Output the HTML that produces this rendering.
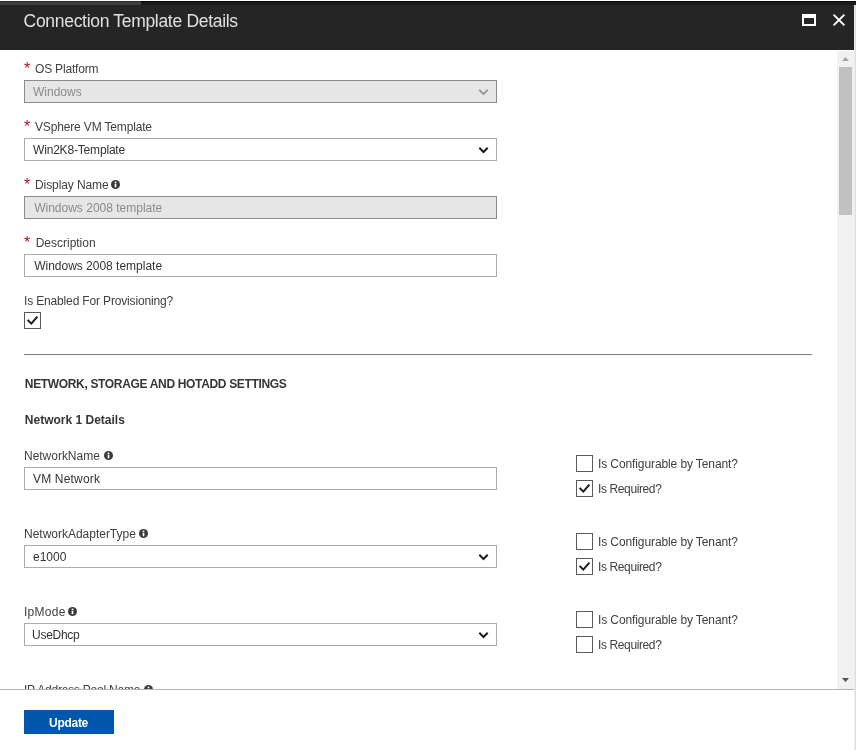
<!DOCTYPE html>
<html lang="en">
<head>
<meta charset="utf-8">
<title>Connection Template Details</title>
<style>
html,body{margin:0;padding:0;}
body{width:856px;height:750px;overflow:hidden;background:#fff;position:relative;
  font-family:"Liberation Sans",sans-serif;font-size:12px;color:#3c3c3c;}
*{box-sizing:border-box;}
#wrap{position:absolute;left:0;top:0;width:856px;height:750px;will-change:transform;}
.abs{position:absolute;}
#hdr{left:0;top:0;width:854px;height:50px;background:#252525;}
#topline{left:0;top:0;width:856px;height:1px;background:#fdfdfd;}
#topdark{left:0;top:1px;width:856px;height:4px;background:#1b1b1b;border-top:1px solid #080808;}
#tab{left:0;top:1px;width:141px;height:4px;background:#3e3e3e;border-top:1px solid #2c2c2c;}
#redge{left:854px;top:5px;width:2px;height:745px;background:#dddde3;border-left:1px solid #ededf1;}
#ttl{left:24px;top:10px;font-size:17.5px;color:#e0e0e0;white-space:nowrap;line-height:22px;}
.lbl{left:24px;white-space:nowrap;line-height:16px;font-size:12px;color:#404040;}
.req{color:#b80d25;font-size:16px;line-height:0;position:relative;top:1px;margin-right:5px;display:inline-block;width:6px;}
.box{left:24px;width:473px;height:23px;border:1px solid #ababab;background:#fff;
  padding-left:8px;padding-top:1px;line-height:21px;font-size:12px;color:#333;white-space:nowrap;}
.box.dis{background:#e6e6e6;border-color:#8c8c8c;color:#8a8a8a;}
.chev{position:absolute;right:7px;top:7px;width:11px;height:8px;}
.cb{width:17px;height:17px;border:1px solid #5a5a5a;background:#fff;}
.cb svg{position:absolute;left:0;top:0;}
.cbl{left:599px;white-space:nowrap;line-height:16px;font-size:12px;color:#404040;}
.info{position:absolute;top:3px;width:9px;height:9px;}
#hr{left:24px;top:354px;width:788px;height:1px;background:#7d7d7d;}
.h1{left:24px;font-weight:bold;font-size:12px;color:#363636;white-space:nowrap;line-height:16px;}
#sbar{left:837px;top:51px;width:17px;height:638px;background:#f1f1f1;}
#thumb{left:839px;top:67px;width:13px;height:148px;background:#c1c1c1;}
#footline{left:0;top:689px;width:854px;height:1px;background:#b5b5b5;}
#foot{left:0;top:690px;width:854px;height:60px;background:#fff;}
#btn{left:24px;top:710px;width:90px;height:24px;background:#0058ad;color:#fff;font-weight:bold;
  font-size:12px;text-align:center;line-height:24px;padding-top:1px;}
</style>
</head>
<body>
<div id="wrap">
<div id="hdr" class="abs"></div>
<div id="topdark" class="abs"></div>
<div id="tab" class="abs"></div>
<div id="topline" class="abs"></div>
<div id="redge" class="abs"></div>
<div id="ttl" class="abs"><span id="title" style="letter-spacing:-0.308px;margin-left:-0.40px;">Connection Template Details</span></div>
<svg class="abs" style="left:802px;top:14px" width="14" height="12" viewBox="0 0 14 12"><path d="M0 0H14V12H0Z M2 4V10H12V4Z" fill="#fff" fill-rule="evenodd"/></svg>
<svg class="abs" style="left:832px;top:13px" width="14" height="14" viewBox="0 0 14 14"><path d="M1.6 1.6L12.4 12.4M12.4 1.6L1.6 12.4" stroke="#fff" stroke-width="1.9" fill="none"/></svg>
<div class="abs lbl" style="top:61px"><span class="req">*</span><span id="osp" style="letter-spacing:-0.190px;">OS Platform</span></div>
<div class="abs box dis" style="top:80px"><span id="win" style="letter-spacing:0.000px;">Windows</span><svg class="chev" viewBox="0 0 11 8"><path d="M1.3 1.8L5.5 6L9.7 1.8" stroke="#8e8e8e" stroke-width="1.7" fill="none"/></svg></div>
<div class="abs lbl" style="top:119px"><span class="req">*</span><span id="vsp" style="letter-spacing:-0.156px;">VSphere VM Template</span></div>
<div class="abs box" style="top:138px"><span id="w2k" style="letter-spacing:-0.179px;">Win2K8-Template</span><svg class="chev" viewBox="0 0 11 8"><path d="M1.3 1.8L5.5 6L9.7 1.8" stroke="#1a1a1a" stroke-width="2" fill="none"/></svg></div>
<div class="abs lbl" style="top:177px"><span class="req">*</span><span id="dn" style="letter-spacing:-0.091px;">Display Name</span><svg class="info" style="left:87px" viewBox="0 0 9 9"><circle cx="4.5" cy="4.5" r="4.5" fill="#3a3a3a"/><rect x="3.65" y="3.7" width="1.7" height="3.6" fill="#fff"/><rect x="3.65" y="1.6" width="1.7" height="1.5" fill="#fff"/></svg></div>
<div class="abs box dis" style="top:196px"><span id="wd1" style="letter-spacing:0.000px;margin-left:1.20px;">Windows 2008 template</span></div>
<div class="abs lbl" style="top:235px"><span class="req">*</span><span id="desc" style="letter-spacing:-0.010px;margin-left:0.70px;">Description</span></div>
<div class="abs box" style="top:254px"><span id="wd2" style="letter-spacing:-0.010px;margin-left:1.20px;">Windows 2008 template</span></div>
<div class="abs lbl" style="top:293px"><span id="ien" style="letter-spacing:-0.156px;">Is Enabled For Provisioning?</span></div>
<div class="abs cb" style="left:24px;top:312px"><svg width="15" height="15" viewBox="0 0 15 15"><path d="M2.6 6.9L6.3 10.6L12.4 3.6" stroke="#1a1a1a" stroke-width="2" fill="none"/></svg></div>
<div id="hr" class="abs"></div>
<div class="abs h1" style="top:376px"><span id="net" style="letter-spacing:-0.337px;margin-left:0.80px;">NETWORK, STORAGE AND HOTADD SETTINGS</span></div>
<div class="abs h1" style="top:412px"><span id="n1d" style="letter-spacing:0.000px;margin-left:0.80px;">Network 1 Details</span></div>
<div class="abs lbl" style="top:448px"><span id="nn" style="letter-spacing:-0.020px;">NetworkName</span><svg class="info" style="left:80px" viewBox="0 0 9 9"><circle cx="4.5" cy="4.5" r="4.5" fill="#3a3a3a"/><rect x="3.65" y="3.7" width="1.7" height="3.6" fill="#fff"/><rect x="3.65" y="1.6" width="1.7" height="1.5" fill="#fff"/></svg></div>
<div class="abs box" style="top:467px"><span id="vmn" style="letter-spacing:0.178px;">VM Network</span></div>
<div class="abs cb" style="left:576px;top:455px"></div>
<div class="abs cbl" style="top:456px"><span id="c1" style="letter-spacing:-0.104px;margin-left:-1.00px;">Is Configurable by Tenant?</span></div>
<div class="abs cb" style="left:576px;top:480px"><svg width="15" height="15" viewBox="0 0 15 15"><path d="M2.6 6.9L6.3 10.6L12.4 3.6" stroke="#1a1a1a" stroke-width="2" fill="none"/></svg></div>
<div class="abs cbl" style="top:481px"><span id="r1" style="letter-spacing:-0.382px;margin-left:-1.00px;">Is Required?</span></div>
<div class="abs lbl" style="top:526px"><span id="nat" style="letter-spacing:-0.012px;">NetworkAdapterType</span><svg class="info" style="left:115px" viewBox="0 0 9 9"><circle cx="4.5" cy="4.5" r="4.5" fill="#3a3a3a"/><rect x="3.65" y="3.7" width="1.7" height="3.6" fill="#fff"/><rect x="3.65" y="1.6" width="1.7" height="1.5" fill="#fff"/></svg></div>
<div class="abs box" style="top:545px"><span id="e1k" style="letter-spacing:0.000px;">e1000</span><svg class="chev" viewBox="0 0 11 8"><path d="M1.3 1.8L5.5 6L9.7 1.8" stroke="#1a1a1a" stroke-width="2" fill="none"/></svg></div>
<div class="abs cb" style="left:576px;top:533px"></div>
<div class="abs cbl" style="top:534px"><span id="c2" style="letter-spacing:-0.104px;margin-left:-1.00px;">Is Configurable by Tenant?</span></div>
<div class="abs cb" style="left:576px;top:558px"><svg width="15" height="15" viewBox="0 0 15 15"><path d="M2.6 6.9L6.3 10.6L12.4 3.6" stroke="#1a1a1a" stroke-width="2" fill="none"/></svg></div>
<div class="abs cbl" style="top:559px"><span id="r2" style="letter-spacing:-0.382px;margin-left:-1.00px;">Is Required?</span></div>
<div class="abs lbl" style="top:604px"><span id="ipm" style="letter-spacing:0.280px;">IpMode</span><svg class="info" style="left:44px" viewBox="0 0 9 9"><circle cx="4.5" cy="4.5" r="4.5" fill="#3a3a3a"/><rect x="3.65" y="3.7" width="1.7" height="3.6" fill="#fff"/><rect x="3.65" y="1.6" width="1.7" height="1.5" fill="#fff"/></svg></div>
<div class="abs box" style="top:623px"><span id="dhcp" style="letter-spacing:-0.283px;margin-left:-0.90px;">UseDhcp</span><svg class="chev" viewBox="0 0 11 8"><path d="M1.3 1.8L5.5 6L9.7 1.8" stroke="#1a1a1a" stroke-width="2" fill="none"/></svg></div>
<div class="abs cb" style="left:576px;top:611px"></div>
<div class="abs cbl" style="top:612px"><span id="c3" style="letter-spacing:-0.104px;margin-left:-1.00px;">Is Configurable by Tenant?</span></div>
<div class="abs cb" style="left:576px;top:636px"></div>
<div class="abs cbl" style="top:637px"><span id="r3" style="letter-spacing:-0.382px;margin-left:-1.00px;">Is Required?</span></div>
<div class="abs lbl" style="top:682px"><span id="ipn" style="letter-spacing:-0.211px;">IP Address Pool Name</span><svg class="info" style="left:120px" viewBox="0 0 9 9"><circle cx="4.5" cy="4.5" r="4.5" fill="#3a3a3a"/><rect x="3.65" y="3.7" width="1.7" height="3.6" fill="#fff"/><rect x="3.65" y="1.6" width="1.7" height="1.5" fill="#fff"/></svg></div>
<div id="sbar" class="abs"></div>
<div id="thumb" class="abs"></div>
<svg class="abs" style="left:842px;top:57px" width="7" height="4" viewBox="0 0 7 4"><path d="M0 4L3.5 0L7 4Z" fill="#a3a3a3"/></svg>
<svg class="abs" style="left:842px;top:678px" width="7" height="4" viewBox="0 0 7 4"><path d="M0 0L3.5 4L7 0Z" fill="#505050"/></svg>
<div id="foot" class="abs"></div>
<div id="footline" class="abs"></div>
<div id="btn" class="abs"><span id="upd" style="letter-spacing:-0.280px;margin-left:-1.00px;">Update</span></div>
</div>
</body>
</html>
